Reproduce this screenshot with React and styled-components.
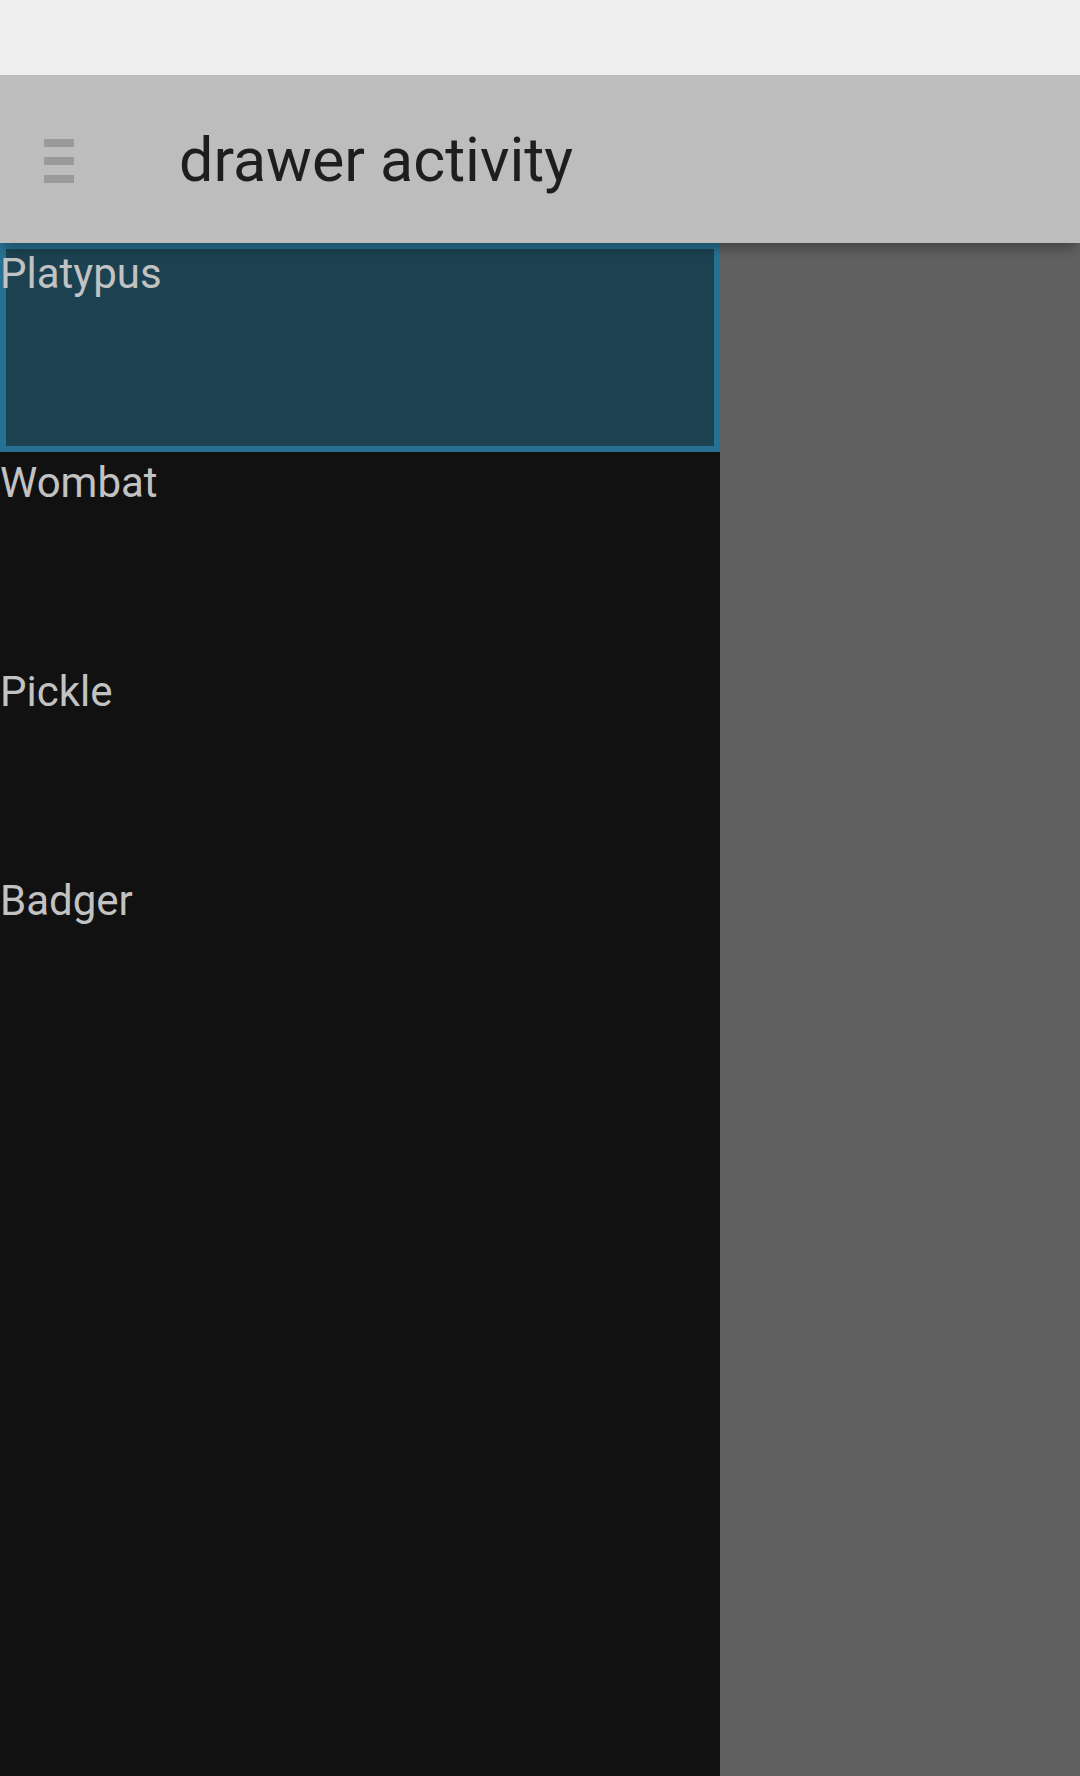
import React from "react";
import styled, { createGlobalStyle } from "styled-components";

const Global = createGlobalStyle`
  html, body { margin: 0; padding: 0; background: #606060; }
  body { font-family: Roboto, "Noto Sans", "Liberation Sans", sans-serif; }
  * { box-sizing: border-box; }
`;

const Screen = styled.div`
  width: 1080px;
  height: 1776px;
  display: flex;
  flex-direction: column;
  background: #606060;
  overflow: hidden;
`;

const StatusBar = styled.div`
  position: relative;
  z-index: 3;
  height: 75px;
  flex: none;
  background: #eeeeee;
`;

const Toolbar = styled.header`
  position: relative;
  z-index: 2;
  height: 168px;
  flex: none;
  display: flex;
  align-items: center;
  background: #bdbdbd;
  box-shadow: 0 8px 12px -4px rgba(0, 0, 0, 0.35);
`;

const MenuButton = styled.div`
  width: 30px;
  margin-left: 44px;
  margin-right: 105px;
  margin-top: 3px;
  display: flex;
  flex-direction: column;
  gap: 10px;
`;

const MenuBar = styled.span`
  display: block;
  height: 8px;
  background: #9a9a9a;
`;

const Title = styled.h1`
  margin: 0;
  margin-top: 2px;
  font-family: Roboto, "Noto Sans", sans-serif;
  font-weight: 400;
  font-size: 61px;
  color: #1e1e1e;
  letter-spacing: 0;
`;

const Body = styled.div`
  flex: 1;
  display: flex;
`;

const Drawer = styled.nav`
  width: 720px;
  flex: none;
  background: #111111;
  display: flex;
  flex-direction: column;
`;

const Item = styled.div`
  height: 209px;
  padding-top: 6px;
  font-family: Roboto, "Noto Sans", sans-serif;
  font-size: 42px;
  line-height: normal;
  color: #c2c2c2;
  background: ${(p) => (p.$selected ? "#1c4252" : "transparent")};
  box-shadow: ${(p) => (p.$selected ? "inset 0 0 0 6px #267191" : "none")};
`;

const Scrim = styled.div`
  flex: 1;
  background: #606060;
`;

const items = ["Platypus", "Wombat", "Pickle", "Badger"];

export default function App() {
  return (
    <>
      <Global />
      <Screen>
        <StatusBar />
        <Toolbar>
          <MenuButton>
            <MenuBar />
            <MenuBar />
            <MenuBar />
          </MenuButton>
          <Title>drawer activity</Title>
        </Toolbar>
        <Body>
          <Drawer>
            {items.map((name, i) => (
              <Item key={name} $selected={i === 0}>
                {name}
              </Item>
            ))}
          </Drawer>
          <Scrim />
        </Body>
      </Screen>
    </>
  );
}
